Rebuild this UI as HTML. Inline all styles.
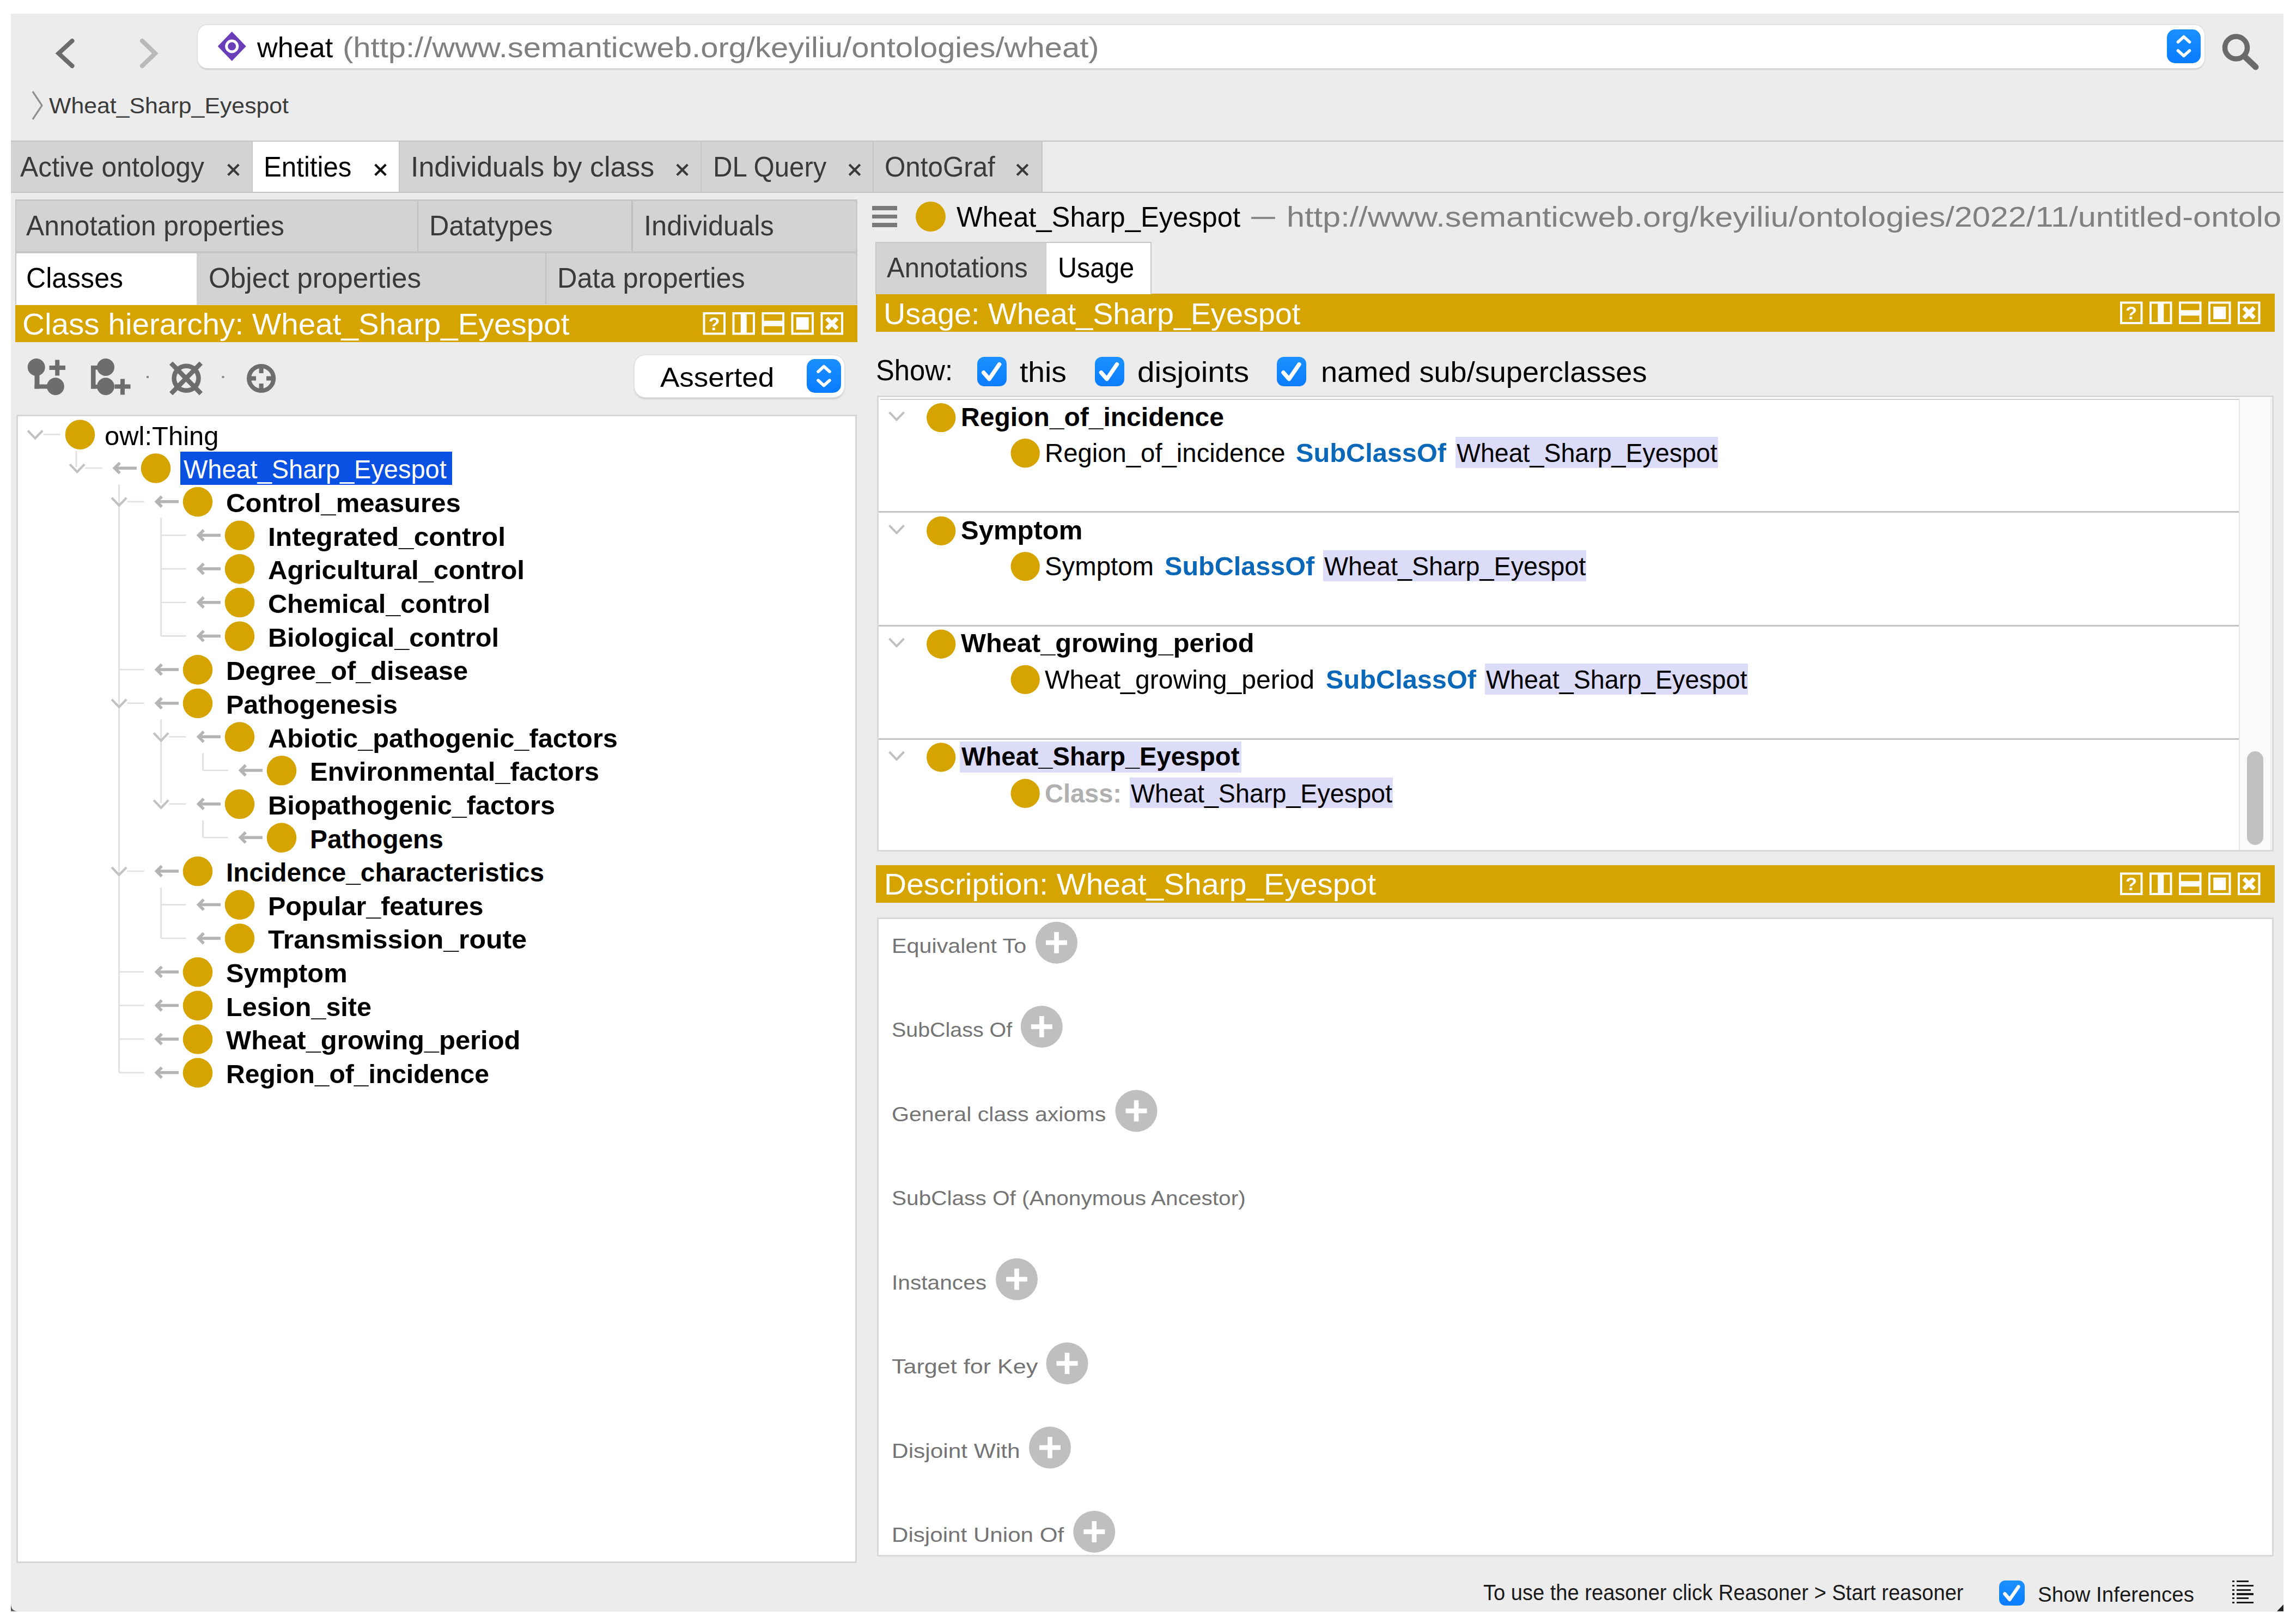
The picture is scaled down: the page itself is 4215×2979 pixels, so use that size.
<!DOCTYPE html>
<html lang="en"><head><meta charset="utf-8"><title>wheat - Protege</title>
<style>
html,body{margin:0;padding:0;background:#fff;}
body{width:4215px;height:2979px;position:relative;overflow:hidden;font-family:"Liberation Sans", sans-serif;}
#r div{position:absolute;}
#t span{position:absolute;white-space:pre;line-height:1;transform-origin:0 0;}
#t b{font-weight:bold;}
svg{position:absolute;left:0;top:0;}
</style></head>
<body>
<div id="r">
<div style="left:20.0px;top:25.0px;width:4172.0px;height:2932.5px;background:#ececec;border-radius:0 0 0 14px;"></div>
<div style="left:363.0px;top:46.0px;width:3684.0px;height:78.5px;background:#fff;border-radius:18px;box-shadow:0 0 0 1.5px #dedede,0 3px 3px -1px #a9a9a9;"></div>
<div style="left:3978.0px;top:54.0px;width:62.0px;height:62.0px;background:linear-gradient(#1a90ff,#087bff);border-radius:15px;"></div>
<div style="left:20.0px;top:258.0px;width:4172.0px;height:96.0px;background:#c3c3c3;"></div>
<div style="left:20.0px;top:260.0px;width:4172.0px;height:92.0px;background:#ececec;"></div>
<div style="left:20.0px;top:260.0px;width:1893.0px;height:92.0px;background:#d3d3d3;"></div>
<div style="left:463.0px;top:260.0px;width:269.0px;height:92.0px;background:#fff;"></div>
<div style="left:461.5px;top:260.0px;width:2.0px;height:92.0px;background:#c6c6c6;"></div>
<div style="left:732.0px;top:260.0px;width:2.0px;height:92.0px;background:#c6c6c6;"></div>
<div style="left:1286.0px;top:260.0px;width:2.0px;height:92.0px;background:#c6c6c6;"></div>
<div style="left:1602.0px;top:260.0px;width:2.0px;height:92.0px;background:#c6c6c6;"></div>
<div style="left:1912.0px;top:260.0px;width:2.0px;height:92.0px;background:#c6c6c6;"></div>
<div style="left:28.0px;top:366.0px;width:1546.0px;height:193.0px;background:#c6c6c6;"></div>
<div style="left:30.0px;top:368.5px;width:1542.0px;height:92.5px;background:#d3d3d3;"></div>
<div style="left:30.0px;top:464.5px;width:1542.0px;height:93.5px;background:#d3d3d3;"></div>
<div style="left:765.5px;top:368.5px;width:2.5px;height:92.5px;background:#c0c0c0;"></div>
<div style="left:1159.0px;top:368.5px;width:2.5px;height:92.5px;background:#c0c0c0;"></div>
<div style="left:30.0px;top:464.5px;width:331.0px;height:94.5px;background:#fff;"></div>
<div style="left:1000.5px;top:464.5px;width:2.5px;height:93.5px;background:#c0c0c0;"></div>
<div style="left:28.0px;top:560.0px;width:1546.0px;height:68.0px;background:#d6a400;"></div>
<div style="left:1608.0px;top:539.0px;width:2567.5px;height:69.5px;background:#d6a400;"></div>
<div style="left:1608.0px;top:1588.0px;width:2567.5px;height:69.0px;background:#d6a400;"></div>
<div style="left:1165.0px;top:651.5px;width:384.7px;height:77.0px;background:#fff;border-radius:20px;box-shadow:0 0 0 1.5px #e0e0e0,0 3px 4px -1px #aaa;"></div>
<div style="left:1481.4px;top:659.3px;width:62.2px;height:61.7px;background:linear-gradient(#1a90ff,#087bff);border-radius:15px;"></div>
<div style="left:30.0px;top:760.5px;width:1543.0px;height:2108.5px;background:#d6d6d6;"></div>
<div style="left:33.0px;top:763.5px;width:1537.0px;height:2102.5px;background:#fff;"></div>
<div style="left:331.0px;top:829.0px;width:498.5px;height:61.0px;background:#0a50e2;"></div>
<div style="left:1601.0px;top:378.0px;width:46.0px;height:7.5px;background:#7a7a7a;"></div>
<div style="left:1601.0px;top:393.5px;width:46.0px;height:7.5px;background:#7a7a7a;"></div>
<div style="left:1601.0px;top:409.0px;width:46.0px;height:7.5px;background:#7a7a7a;"></div>
<div style="left:2297.0px;top:398.0px;width:44.0px;height:3.5px;background:#8a8a8a;"></div>
<div style="left:1607.0px;top:443.5px;width:507.0px;height:96.5px;background:#c8c8c8;"></div>
<div style="left:1609.0px;top:445.5px;width:310.6px;height:94.0px;background:#d3d3d3;"></div>
<div style="left:1921.0px;top:445.5px;width:191.0px;height:94.5px;background:#fff;"></div>
<div style="left:1793.6px;top:655.2px;width:54.0px;height:54.0px;background:linear-gradient(#1b91ff,#0a7cff);border-radius:13.0px;"></div>
<div style="left:2009.5px;top:655.2px;width:54.0px;height:54.0px;background:linear-gradient(#1b91ff,#0a7cff);border-radius:13.0px;"></div>
<div style="left:2344.0px;top:655.2px;width:54.0px;height:54.0px;background:linear-gradient(#1b91ff,#0a7cff);border-radius:13.0px;"></div>
<div style="left:1610.0px;top:726.0px;width:2564.0px;height:837.0px;background:#d8d8d8;"></div>
<div style="left:1613.0px;top:729.0px;width:2558.0px;height:831.0px;background:#fff;"></div>
<div style="left:4110.0px;top:731.0px;width:56.0px;height:829.0px;background:#fafafa;border-left:2px solid #e6e6e6;border-right:2px solid #e9e9e9;"></div>
<div style="left:4125.3px;top:1379.4px;width:30.2px;height:171.9px;background:#c1c1c1;border-radius:15px;"></div>
<div style="left:1616.0px;top:731.8px;width:2494.0px;height:2.5px;background:#cdcdcd;"></div>
<div style="left:1613.0px;top:938.1px;width:2497.0px;height:2.8px;background:#c4c4c4;"></div>
<div style="left:1613.0px;top:1147.1px;width:2497.0px;height:2.8px;background:#c4c4c4;"></div>
<div style="left:1613.0px;top:1355.1px;width:2497.0px;height:2.8px;background:#c4c4c4;"></div>
<div style="left:2671.6px;top:802.3px;width:482.2px;height:57.0px;background:#dcdcf8;"></div>
<div style="left:2428.6px;top:1010.1px;width:483.7px;height:57.0px;background:#dcdcf8;"></div>
<div style="left:2725.7px;top:1217.9px;width:482.9px;height:57.0px;background:#dcdcf8;"></div>
<div style="left:1762.0px;top:1361.0px;width:517.0px;height:56.6px;background:#dcdcf8;"></div>
<div style="left:2073.5px;top:1427.0px;width:483.5px;height:55.7px;background:#dcdcf8;"></div>
<div style="left:1610.0px;top:1684.0px;width:2564.0px;height:1173.0px;background:#d8d8d8;"></div>
<div style="left:1613.0px;top:1687.0px;width:2558.0px;height:1167.0px;background:#fff;"></div>
<div style="left:3670.0px;top:2900.8px;width:46.6px;height:46.6px;background:linear-gradient(#1b91ff,#0a7cff);border-radius:11.2px;"></div>
<div style="left:4105.8px;top:2901.0px;width:22.7px;height:3.3px;background:#1a1a1a;"></div>
<div style="left:4097.8px;top:2901.0px;width:3.8px;height:3.3px;background:#1a1a1a;"></div>
<div style="left:4105.8px;top:2908.8px;width:31.2px;height:3.3px;background:#1a1a1a;"></div>
<div style="left:4097.8px;top:2908.8px;width:3.8px;height:3.3px;background:#1a1a1a;"></div>
<div style="left:4105.8px;top:2916.5px;width:26.2px;height:3.3px;background:#1a1a1a;"></div>
<div style="left:4097.8px;top:2916.5px;width:3.8px;height:3.3px;background:#1a1a1a;"></div>
<div style="left:4105.8px;top:2924.3px;width:31.2px;height:3.3px;background:#1a1a1a;"></div>
<div style="left:4097.8px;top:2924.3px;width:3.8px;height:3.3px;background:#1a1a1a;"></div>
<div style="left:4105.8px;top:2932.0px;width:22.7px;height:3.3px;background:#1a1a1a;"></div>
<div style="left:4097.8px;top:2932.0px;width:3.8px;height:3.3px;background:#1a1a1a;"></div>
<div style="left:4105.8px;top:2939.8px;width:31.2px;height:3.3px;background:#1a1a1a;"></div>
<div style="left:4097.8px;top:2939.8px;width:3.8px;height:3.3px;background:#1a1a1a;"></div>
</div>
<svg width="4215" height="2979" viewBox="0 0 4215 2979">
<polyline points="132.5,75 107.5,98 132.5,121" fill="none" stroke="#6b6b6b" stroke-width="8" stroke-linecap="round" stroke-linejoin="miter"/>
<polyline points="261,75 285,98 261,121" fill="none" stroke="#b9b9b9" stroke-width="8" stroke-linecap="round" stroke-linejoin="miter"/>
<g transform="translate(425.7,85)"><path d="M0,-27 L26,0 L0,27 L-26,0 Z" fill="#6a3eb8"/><circle r="12.5" fill="#fff"/><circle r="7.5" fill="#6a3eb8"/></g>
<g fill="none" stroke="#fff" stroke-width="5.6" stroke-linecap="round" stroke-linejoin="round"><polyline points="3998.5,77.0 4009.0,67.5 4019.5,77.0"/><polyline points="3998.5,93.0 4009.0,102.5 4019.5,93.0"/></g>
<g fill="none" stroke="#6a6a6a" stroke-linecap="round"><circle cx="4105" cy="87.5" r="20.5" stroke-width="9.5"/><line x1="4121" y1="104" x2="4141" y2="123" stroke-width="11"/></g>
<polyline points="60,168 77,193.5 60,219" fill="none" stroke="#8f8f8f" stroke-width="3.2" stroke-linejoin="miter"/>
<g stroke="#3a3a3a" stroke-width="4.2" stroke-linecap="butt"><line x1="418.7" y1="301.9" x2="438.3" y2="321.5"/><line x1="418.7" y1="321.5" x2="438.3" y2="301.9"/></g>
<g stroke="#111" stroke-width="4.2" stroke-linecap="butt"><line x1="688.7" y1="301.9" x2="708.3" y2="321.5"/><line x1="688.7" y1="321.5" x2="708.3" y2="301.9"/></g>
<g stroke="#3a3a3a" stroke-width="4.2" stroke-linecap="butt"><line x1="1242.8" y1="301.9" x2="1262.3999999999999" y2="321.5"/><line x1="1242.8" y1="321.5" x2="1262.3999999999999" y2="301.9"/></g>
<g stroke="#3a3a3a" stroke-width="4.2" stroke-linecap="butt"><line x1="1559.2" y1="301.9" x2="1578.8" y2="321.5"/><line x1="1559.2" y1="321.5" x2="1578.8" y2="301.9"/></g>
<g stroke="#3a3a3a" stroke-width="4.2" stroke-linecap="butt"><line x1="1867.2" y1="301.9" x2="1886.8" y2="321.5"/><line x1="1867.2" y1="321.5" x2="1886.8" y2="301.9"/></g>
<rect x="1292.5" y="575" width="37.5" height="37.5" fill="none" stroke="#fff" stroke-width="4"/>
<text x="1311.25" y="605.75" font-family="'Liberation Sans', sans-serif" font-weight="bold" font-size="34" fill="#fff" text-anchor="middle">?</text>
<rect x="1346.5" y="575" width="37.5" height="37.5" fill="none" stroke="#fff" stroke-width="4"/>
<rect x="1359.75" y="575" width="11" height="37.5" fill="#fff"/>
<rect x="1400.5" y="575" width="37.5" height="37.5" fill="none" stroke="#fff" stroke-width="4"/>
<rect x="1400.5" y="588.75" width="37.5" height="10" fill="#fff"/>
<rect x="1454.5" y="575" width="37.5" height="37.5" fill="none" stroke="#fff" stroke-width="4"/>
<rect x="1461.75" y="582.25" width="23" height="23" fill="#fff"/>
<rect x="1508.5" y="575" width="37.5" height="37.5" fill="none" stroke="#fff" stroke-width="4"/>
<g stroke="#fff" stroke-width="7.5"><line x1="1517.75" y1="584.25" x2="1536.75" y2="603.25"/><line x1="1517.75" y1="603.25" x2="1536.75" y2="584.25"/></g>
<rect x="3894" y="555.5" width="37.5" height="37.5" fill="none" stroke="#fff" stroke-width="4"/>
<text x="3912.75" y="586.25" font-family="'Liberation Sans', sans-serif" font-weight="bold" font-size="34" fill="#fff" text-anchor="middle">?</text>
<rect x="3948" y="555.5" width="37.5" height="37.5" fill="none" stroke="#fff" stroke-width="4"/>
<rect x="3961.25" y="555.5" width="11" height="37.5" fill="#fff"/>
<rect x="4002" y="555.5" width="37.5" height="37.5" fill="none" stroke="#fff" stroke-width="4"/>
<rect x="4002" y="569.25" width="37.5" height="10" fill="#fff"/>
<rect x="4056" y="555.5" width="37.5" height="37.5" fill="none" stroke="#fff" stroke-width="4"/>
<rect x="4063.25" y="562.75" width="23" height="23" fill="#fff"/>
<rect x="4110" y="555.5" width="37.5" height="37.5" fill="none" stroke="#fff" stroke-width="4"/>
<g stroke="#fff" stroke-width="7.5"><line x1="4119.25" y1="564.75" x2="4138.25" y2="583.75"/><line x1="4119.25" y1="583.75" x2="4138.25" y2="564.75"/></g>
<rect x="3894" y="1603.5" width="37.5" height="37.5" fill="none" stroke="#fff" stroke-width="4"/>
<text x="3912.75" y="1634.25" font-family="'Liberation Sans', sans-serif" font-weight="bold" font-size="34" fill="#fff" text-anchor="middle">?</text>
<rect x="3948" y="1603.5" width="37.5" height="37.5" fill="none" stroke="#fff" stroke-width="4"/>
<rect x="3961.25" y="1603.5" width="11" height="37.5" fill="#fff"/>
<rect x="4002" y="1603.5" width="37.5" height="37.5" fill="none" stroke="#fff" stroke-width="4"/>
<rect x="4002" y="1617.25" width="37.5" height="10" fill="#fff"/>
<rect x="4056" y="1603.5" width="37.5" height="37.5" fill="none" stroke="#fff" stroke-width="4"/>
<rect x="4063.25" y="1610.75" width="23" height="23" fill="#fff"/>
<rect x="4110" y="1603.5" width="37.5" height="37.5" fill="none" stroke="#fff" stroke-width="4"/>
<g stroke="#fff" stroke-width="7.5"><line x1="4119.25" y1="1612.75" x2="4138.25" y2="1631.75"/><line x1="4119.25" y1="1631.75" x2="4138.25" y2="1612.75"/></g>
<g fill="#6d6d6d" stroke="none"><circle cx="66.7" cy="674" r="16"/><circle cx="101.9" cy="709.3" r="16"/><rect x="63.5" y="680" width="9" height="33.5"/><rect x="63.5" y="705.5" width="30" height="8"/><rect x="90.5" y="671" width="29.5" height="8"/><rect x="101.2" y="660.5" width="8" height="29"/></g>
<g fill="#6d6d6d" stroke="none"><circle cx="194" cy="674" r="16"/><circle cx="194" cy="709.3" r="16"/><rect x="167" y="671" width="8.5" height="42.5"/><rect x="167" y="671" width="20" height="7.5"/><rect x="167" y="706" width="20" height="7.5"/><rect x="210.5" y="705.5" width="29" height="8"/><rect x="221" y="695.5" width="8" height="29"/></g>
<rect x="269" y="690" width="4" height="4" fill="#8a8a8a"/><rect x="407.5" y="690" width="4" height="4" fill="#8a8a8a"/>
<g fill="none" stroke="#6d6d6d" stroke-width="8.5"><circle cx="342" cy="694.3" r="22.5"/><line x1="314" y1="666.5" x2="369" y2="722.5"/><line x1="314" y1="722.5" x2="369" y2="666.5"/></g>
<g fill="none" stroke="#6d6d6d" stroke-width="8"><circle cx="479.6" cy="694.5" r="22.6"/><line x1="479.6" y1="672" x2="479.6" y2="685"/><line x1="479.6" y1="704" x2="479.6" y2="717"/><line x1="457" y1="694.5" x2="470" y2="694.5"/><line x1="489" y1="694.5" x2="502" y2="694.5"/></g>
<g fill="none" stroke="#fff" stroke-width="5.6" stroke-linecap="round" stroke-linejoin="round"><polyline points="1502.0,682.15 1512.5,672.65 1523.0,682.15"/><polyline points="1502.0,698.15 1512.5,707.65 1523.0,698.15"/></g>
<line x1="140.1" y1="827.5" x2="140.1" y2="857.15" stroke="#e1e1e1" stroke-width="3"/>
<line x1="218.6" y1="889.15" x2="218.6" y2="1968.85" stroke="#e1e1e1" stroke-width="3"/>
<line x1="295.6" y1="950.8" x2="295.6" y2="1167.4" stroke="#e1e1e1" stroke-width="3"/>
<line x1="295.6" y1="1320.7" x2="295.6" y2="1473.65" stroke="#e1e1e1" stroke-width="3"/>
<line x1="372.6" y1="1382.35" x2="372.6" y2="1414.0" stroke="#e1e1e1" stroke-width="3"/>
<line x1="372.6" y1="1505.65" x2="372.6" y2="1537.3" stroke="#e1e1e1" stroke-width="3"/>
<line x1="295.6" y1="1628.9499999999998" x2="295.6" y2="1722.25" stroke="#e1e1e1" stroke-width="3"/>
<circle cx="147" cy="797.80" r="27.3" fill="#d6a400"/>
<polyline points="51.099999999999994,790.5 64.6,804.5 78.1,790.5" fill="none" stroke="#c2c2c2" stroke-width="4.2" stroke-linejoin="miter"/>
<line x1="79.6" y1="797.5" x2="110.6" y2="797.5" stroke="#e1e1e1" stroke-width="2.6"/>
<circle cx="286" cy="859.45" r="27.3" fill="#d6a400"/>
<polyline points="128.1,852.15 141.6,866.15 155.1,852.15" fill="none" stroke="#c2c2c2" stroke-width="4.2" stroke-linejoin="miter"/>
<line x1="156.6" y1="859.15" x2="187.6" y2="859.15" stroke="#e1e1e1" stroke-width="2.6"/>
<g fill="none" stroke="#b4b4b4" stroke-width="5.5" stroke-linejoin="miter"><line x1="211" y1="859.15" x2="251" y2="859.15"/><polyline points="220,849.65 210.5,859.15 220,868.65"/></g>
<circle cx="363" cy="921.10" r="27.3" fill="#d6a400"/>
<polyline points="205.1,913.8 218.6,927.8 232.1,913.8" fill="none" stroke="#c2c2c2" stroke-width="4.2" stroke-linejoin="miter"/>
<line x1="233.6" y1="920.8" x2="264.6" y2="920.8" stroke="#e1e1e1" stroke-width="2.6"/>
<g fill="none" stroke="#b4b4b4" stroke-width="5.5" stroke-linejoin="miter"><line x1="288" y1="920.8" x2="328" y2="920.8"/><polyline points="297,911.3 287.5,920.8 297,930.3"/></g>
<circle cx="440" cy="982.75" r="27.3" fill="#d6a400"/>
<line x1="295.6" y1="982.45" x2="341.6" y2="982.45" stroke="#e1e1e1" stroke-width="2.6"/>
<g fill="none" stroke="#b4b4b4" stroke-width="5.5" stroke-linejoin="miter"><line x1="365" y1="982.45" x2="405" y2="982.45"/><polyline points="374,972.95 364.5,982.45 374,991.95"/></g>
<circle cx="440" cy="1044.40" r="27.3" fill="#d6a400"/>
<line x1="295.6" y1="1044.1" x2="341.6" y2="1044.1" stroke="#e1e1e1" stroke-width="2.6"/>
<g fill="none" stroke="#b4b4b4" stroke-width="5.5" stroke-linejoin="miter"><line x1="365" y1="1044.1" x2="405" y2="1044.1"/><polyline points="374,1034.6 364.5,1044.1 374,1053.6"/></g>
<circle cx="440" cy="1106.05" r="27.3" fill="#d6a400"/>
<line x1="295.6" y1="1105.75" x2="341.6" y2="1105.75" stroke="#e1e1e1" stroke-width="2.6"/>
<g fill="none" stroke="#b4b4b4" stroke-width="5.5" stroke-linejoin="miter"><line x1="365" y1="1105.75" x2="405" y2="1105.75"/><polyline points="374,1096.25 364.5,1105.75 374,1115.25"/></g>
<circle cx="440" cy="1167.70" r="27.3" fill="#d6a400"/>
<line x1="295.6" y1="1167.4" x2="341.6" y2="1167.4" stroke="#e1e1e1" stroke-width="2.6"/>
<g fill="none" stroke="#b4b4b4" stroke-width="5.5" stroke-linejoin="miter"><line x1="365" y1="1167.4" x2="405" y2="1167.4"/><polyline points="374,1157.9 364.5,1167.4 374,1176.9"/></g>
<circle cx="363" cy="1229.35" r="27.3" fill="#d6a400"/>
<line x1="218.6" y1="1229.05" x2="264.6" y2="1229.05" stroke="#e1e1e1" stroke-width="2.6"/>
<g fill="none" stroke="#b4b4b4" stroke-width="5.5" stroke-linejoin="miter"><line x1="288" y1="1229.05" x2="328" y2="1229.05"/><polyline points="297,1219.55 287.5,1229.05 297,1238.55"/></g>
<circle cx="363" cy="1291.00" r="27.3" fill="#d6a400"/>
<polyline points="205.1,1283.7 218.6,1297.7 232.1,1283.7" fill="none" stroke="#c2c2c2" stroke-width="4.2" stroke-linejoin="miter"/>
<line x1="233.6" y1="1290.7" x2="264.6" y2="1290.7" stroke="#e1e1e1" stroke-width="2.6"/>
<g fill="none" stroke="#b4b4b4" stroke-width="5.5" stroke-linejoin="miter"><line x1="288" y1="1290.7" x2="328" y2="1290.7"/><polyline points="297,1281.2 287.5,1290.7 297,1300.2"/></g>
<circle cx="440" cy="1352.65" r="27.3" fill="#d6a400"/>
<polyline points="282.1,1345.35 295.6,1359.35 309.1,1345.35" fill="none" stroke="#c2c2c2" stroke-width="4.2" stroke-linejoin="miter"/>
<line x1="310.6" y1="1352.35" x2="341.6" y2="1352.35" stroke="#e1e1e1" stroke-width="2.6"/>
<g fill="none" stroke="#b4b4b4" stroke-width="5.5" stroke-linejoin="miter"><line x1="365" y1="1352.35" x2="405" y2="1352.35"/><polyline points="374,1342.85 364.5,1352.35 374,1361.85"/></g>
<circle cx="517" cy="1414.30" r="27.3" fill="#d6a400"/>
<line x1="372.6" y1="1414.0" x2="418.6" y2="1414.0" stroke="#e1e1e1" stroke-width="2.6"/>
<g fill="none" stroke="#b4b4b4" stroke-width="5.5" stroke-linejoin="miter"><line x1="442" y1="1414.0" x2="482" y2="1414.0"/><polyline points="451,1404.5 441.5,1414.0 451,1423.5"/></g>
<circle cx="440" cy="1475.95" r="27.3" fill="#d6a400"/>
<polyline points="282.1,1468.65 295.6,1482.65 309.1,1468.65" fill="none" stroke="#c2c2c2" stroke-width="4.2" stroke-linejoin="miter"/>
<line x1="310.6" y1="1475.65" x2="341.6" y2="1475.65" stroke="#e1e1e1" stroke-width="2.6"/>
<g fill="none" stroke="#b4b4b4" stroke-width="5.5" stroke-linejoin="miter"><line x1="365" y1="1475.65" x2="405" y2="1475.65"/><polyline points="374,1466.15 364.5,1475.65 374,1485.15"/></g>
<circle cx="517" cy="1537.60" r="27.3" fill="#d6a400"/>
<line x1="372.6" y1="1537.3" x2="418.6" y2="1537.3" stroke="#e1e1e1" stroke-width="2.6"/>
<g fill="none" stroke="#b4b4b4" stroke-width="5.5" stroke-linejoin="miter"><line x1="442" y1="1537.3" x2="482" y2="1537.3"/><polyline points="451,1527.8 441.5,1537.3 451,1546.8"/></g>
<circle cx="363" cy="1599.25" r="27.3" fill="#d6a400"/>
<polyline points="205.1,1591.9499999999998 218.6,1605.9499999999998 232.1,1591.9499999999998" fill="none" stroke="#c2c2c2" stroke-width="4.2" stroke-linejoin="miter"/>
<line x1="233.6" y1="1598.9499999999998" x2="264.6" y2="1598.9499999999998" stroke="#e1e1e1" stroke-width="2.6"/>
<g fill="none" stroke="#b4b4b4" stroke-width="5.5" stroke-linejoin="miter"><line x1="288" y1="1598.9499999999998" x2="328" y2="1598.9499999999998"/><polyline points="297,1589.4499999999998 287.5,1598.9499999999998 297,1608.4499999999998"/></g>
<circle cx="440" cy="1660.90" r="27.3" fill="#d6a400"/>
<line x1="295.6" y1="1660.6" x2="341.6" y2="1660.6" stroke="#e1e1e1" stroke-width="2.6"/>
<g fill="none" stroke="#b4b4b4" stroke-width="5.5" stroke-linejoin="miter"><line x1="365" y1="1660.6" x2="405" y2="1660.6"/><polyline points="374,1651.1 364.5,1660.6 374,1670.1"/></g>
<circle cx="440" cy="1722.55" r="27.3" fill="#d6a400"/>
<line x1="295.6" y1="1722.25" x2="341.6" y2="1722.25" stroke="#e1e1e1" stroke-width="2.6"/>
<g fill="none" stroke="#b4b4b4" stroke-width="5.5" stroke-linejoin="miter"><line x1="365" y1="1722.25" x2="405" y2="1722.25"/><polyline points="374,1712.75 364.5,1722.25 374,1731.75"/></g>
<circle cx="363" cy="1784.20" r="27.3" fill="#d6a400"/>
<line x1="218.6" y1="1783.9" x2="264.6" y2="1783.9" stroke="#e1e1e1" stroke-width="2.6"/>
<g fill="none" stroke="#b4b4b4" stroke-width="5.5" stroke-linejoin="miter"><line x1="288" y1="1783.9" x2="328" y2="1783.9"/><polyline points="297,1774.4 287.5,1783.9 297,1793.4"/></g>
<circle cx="363" cy="1845.85" r="27.3" fill="#d6a400"/>
<line x1="218.6" y1="1845.55" x2="264.6" y2="1845.55" stroke="#e1e1e1" stroke-width="2.6"/>
<g fill="none" stroke="#b4b4b4" stroke-width="5.5" stroke-linejoin="miter"><line x1="288" y1="1845.55" x2="328" y2="1845.55"/><polyline points="297,1836.05 287.5,1845.55 297,1855.05"/></g>
<circle cx="363" cy="1907.50" r="27.3" fill="#d6a400"/>
<line x1="218.6" y1="1907.2" x2="264.6" y2="1907.2" stroke="#e1e1e1" stroke-width="2.6"/>
<g fill="none" stroke="#b4b4b4" stroke-width="5.5" stroke-linejoin="miter"><line x1="288" y1="1907.2" x2="328" y2="1907.2"/><polyline points="297,1897.7 287.5,1907.2 297,1916.7"/></g>
<circle cx="363" cy="1969.15" r="27.3" fill="#d6a400"/>
<line x1="218.6" y1="1968.85" x2="264.6" y2="1968.85" stroke="#e1e1e1" stroke-width="2.6"/>
<g fill="none" stroke="#b4b4b4" stroke-width="5.5" stroke-linejoin="miter"><line x1="288" y1="1968.85" x2="328" y2="1968.85"/><polyline points="297,1959.35 287.5,1968.85 297,1978.35"/></g>
<circle cx="1708.5" cy="397.5" r="27.5" fill="#d6a400"/>
<polyline points="1805.6,683.7 1816.1,695.7 1834.6,668.7" fill="none" stroke="#fff" stroke-width="7.4" stroke-linecap="round" stroke-linejoin="round"/>
<polyline points="2021.5,683.7 2032.0,695.7 2050.5,668.7" fill="none" stroke="#fff" stroke-width="7.4" stroke-linecap="round" stroke-linejoin="round"/>
<polyline points="2356.0,683.7 2366.5,695.7 2385.0,668.7" fill="none" stroke="#fff" stroke-width="7.4" stroke-linecap="round" stroke-linejoin="round"/>
<polyline points="1632.5,756.6 1646,770.6 1659.5,756.6" fill="none" stroke="#c0c0c0" stroke-width="4" stroke-linejoin="miter"/>
<circle cx="1727.7" cy="766.6" r="26.7" fill="#d6a400"/>
<circle cx="1882.2" cy="831.8" r="26.7" fill="#d6a400"/>
<polyline points="1632.5,964.4000000000001 1646,978.4000000000001 1659.5,964.4000000000001" fill="none" stroke="#c0c0c0" stroke-width="4" stroke-linejoin="miter"/>
<circle cx="1727.7" cy="974.4" r="26.7" fill="#d6a400"/>
<circle cx="1882.2" cy="1039.6" r="26.7" fill="#d6a400"/>
<polyline points="1632.5,1172.2 1646,1186.2 1659.5,1172.2" fill="none" stroke="#c0c0c0" stroke-width="4" stroke-linejoin="miter"/>
<circle cx="1727.7" cy="1182.2" r="26.7" fill="#d6a400"/>
<circle cx="1882.2" cy="1247.4" r="26.7" fill="#d6a400"/>
<polyline points="1632.5,1380 1646,1394 1659.5,1380" fill="none" stroke="#c0c0c0" stroke-width="4" stroke-linejoin="miter"/>
<circle cx="1727.7" cy="1390.0" r="26.7" fill="#d6a400"/>
<circle cx="1882.2" cy="1456.3" r="26.7" fill="#d6a400"/>
<circle cx="1939.5" cy="1730.2" r="38.5" fill="#bfbfbf"/><rect x="1920.0" y="1725.9" width="39" height="8.6" fill="#fff"/><rect x="1935.2" y="1710.7" width="8.6" height="39" fill="#fff"/>
<circle cx="1912.3" cy="1884.5" r="38.5" fill="#bfbfbf"/><rect x="1892.8" y="1880.2" width="39" height="8.6" fill="#fff"/><rect x="1908.0" y="1865.0" width="8.6" height="39" fill="#fff"/>
<circle cx="2086" cy="2039.0" r="38.5" fill="#bfbfbf"/><rect x="2066.5" y="2034.6999999999998" width="39" height="8.6" fill="#fff"/><rect x="2081.7" y="2019.4999999999998" width="8.6" height="39" fill="#fff"/>
<circle cx="1866.5" cy="2348.0" r="38.5" fill="#bfbfbf"/><rect x="1847.0" y="2343.7" width="39" height="8.6" fill="#fff"/><rect x="1862.2" y="2328.5" width="8.6" height="39" fill="#fff"/>
<circle cx="1959" cy="2502.5" r="38.5" fill="#bfbfbf"/><rect x="1939.5" y="2498.2" width="39" height="8.6" fill="#fff"/><rect x="1954.7" y="2483.0" width="8.6" height="39" fill="#fff"/>
<circle cx="1927.5" cy="2657.0" r="38.5" fill="#bfbfbf"/><rect x="1908.0" y="2652.7" width="39" height="8.6" fill="#fff"/><rect x="1923.2" y="2637.5" width="8.6" height="39" fill="#fff"/>
<circle cx="2008.8" cy="2811.5" r="38.5" fill="#bfbfbf"/><rect x="1989.3" y="2807.2" width="39" height="8.6" fill="#fff"/><rect x="2004.5" y="2792.0" width="8.6" height="39" fill="#fff"/>
<polyline points="3680.4,2925.4 3689.4,2935.8 3705.4,2912.5" fill="none" stroke="#fff" stroke-width="6.4" stroke-linecap="round" stroke-linejoin="round"/>
<path d="M4192,2945 L4192,2957.5 L4180,2957.5 Z" fill="#222"/>
<path d="M20,2943 L20,2957.5 L33,2957.5 Q20,2957.5 20,2943 Z" fill="#555"/>
</svg>
<div id="t">
<span style="left:472.4px;top:61.8px;font-size:51.4px;color:#000;transform:scaleX(1.0157)">wheat</span>
<span style="left:628.5px;top:61.8px;font-size:51.4px;color:#808080;transform:scaleX(1.1279)">(http://www.semanticweb.org/keyiliu/ontologies/wheat)</span>
<span style="left:90.0px;top:174.3px;font-size:41.3px;color:#3b3b3b;transform:scaleX(1.0360)">Wheat_Sharp_Eyespot</span>
<span style="left:37.0px;top:280.9px;font-size:51.4px;color:#3a3a3a;transform:scaleX(0.9698)">Active ontology</span>
<span style="left:484.0px;top:280.9px;font-size:51.4px;color:#000;transform:scaleX(0.9583)">Entities</span>
<span style="left:753.8px;top:280.9px;font-size:51.4px;color:#3a3a3a;transform:scaleX(1.0101)">Individuals by class</span>
<span style="left:1308.7px;top:280.9px;font-size:51.4px;color:#3a3a3a;transform:scaleX(0.9554)">DL Query</span>
<span style="left:1624.0px;top:280.9px;font-size:51.4px;color:#3a3a3a;transform:scaleX(0.9595)">OntoGraf</span>
<span style="left:48.0px;top:389.3px;font-size:51.4px;color:#3a3a3a;transform:scaleX(0.9702)">Annotation properties</span>
<span style="left:788.4px;top:389.3px;font-size:51.4px;color:#3a3a3a;transform:scaleX(0.9793)">Datatypes</span>
<span style="left:1181.7px;top:389.3px;font-size:51.4px;color:#3a3a3a;transform:scaleX(0.9834)">Individuals</span>
<span style="left:48.0px;top:484.8px;font-size:51.4px;color:#000;transform:scaleX(0.9738)">Classes</span>
<span style="left:383.0px;top:484.8px;font-size:51.4px;color:#3a3a3a;transform:scaleX(0.9966)">Object properties</span>
<span style="left:1022.6px;top:484.8px;font-size:51.4px;color:#3a3a3a;transform:scaleX(0.9813)">Data properties</span>
<span style="left:41.0px;top:567.5px;font-size:55px;color:#fff;transform:scaleX(1.0300)">Class hierarchy: Wheat_Sharp_Eyespot</span>
<span style="left:1621.7px;top:548.5px;font-size:55px;color:#fff;transform:scaleX(1.0134)">Usage: Wheat_Sharp_Eyespot</span>
<span style="left:1622.7px;top:1596.2px;font-size:55px;color:#fff;transform:scaleX(1.0365)">Description: Wheat_Sharp_Eyespot</span>
<span style="left:1211.8px;top:667.7px;font-size:49.5px;color:#000;transform:scaleX(1.0709)">Asserted</span>
<span style="left:192.0px;top:776.7px;font-size:48px;color:#000;transform:scaleX(1.0198)">owl:Thing</span>
<span style="left:337.0px;top:838.3px;font-size:48px;color:#fff;transform:scaleX(0.9778)">Wheat_Sharp_Eyespot</span>
<span style="left:415.0px;top:900.0px;font-size:48px;color:#000;font-weight:bold;transform:scaleX(1.0219)">Control_measures</span>
<span style="left:492.0px;top:961.6px;font-size:48px;color:#000;font-weight:bold;transform:scaleX(1.0347)">Integrated_control</span>
<span style="left:492.0px;top:1023.3px;font-size:48px;color:#000;font-weight:bold;transform:scaleX(1.0268)">Agricultural_control</span>
<span style="left:492.0px;top:1084.9px;font-size:48px;color:#000;font-weight:bold;transform:scaleX(1.0130)">Chemical_control</span>
<span style="left:492.0px;top:1146.6px;font-size:48px;color:#000;font-weight:bold;transform:scaleX(1.0126)">Biological_control</span>
<span style="left:415.0px;top:1208.2px;font-size:48px;color:#000;font-weight:bold;transform:scaleX(1.0147)">Degree_of_disease</span>
<span style="left:415.0px;top:1269.9px;font-size:48px;color:#000;font-weight:bold;transform:scaleX(1.0093)">Pathogenesis</span>
<span style="left:492.0px;top:1331.5px;font-size:48px;color:#000;font-weight:bold;transform:scaleX(1.0156)">Abiotic_pathogenic_factors</span>
<span style="left:569.0px;top:1393.2px;font-size:48px;color:#000;font-weight:bold;transform:scaleX(1.0208)">Environmental_factors</span>
<span style="left:492.0px;top:1454.8px;font-size:48px;color:#000;font-weight:bold;transform:scaleX(1.0133)">Biopathogenic_factors</span>
<span style="left:569.0px;top:1516.5px;font-size:48px;color:#000;font-weight:bold;transform:scaleX(0.9985)">Pathogens</span>
<span style="left:415.0px;top:1578.1px;font-size:48px;color:#000;font-weight:bold;transform:scaleX(0.9949)">Incidence_characteristics</span>
<span style="left:492.0px;top:1639.8px;font-size:48px;color:#000;font-weight:bold;transform:scaleX(1.0086)">Popular_features</span>
<span style="left:492.0px;top:1701.4px;font-size:48px;color:#000;font-weight:bold;transform:scaleX(1.0413)">Transmission_route</span>
<span style="left:415.0px;top:1763.1px;font-size:48px;color:#000;font-weight:bold;transform:scaleX(1.0178)">Symptom</span>
<span style="left:415.0px;top:1824.7px;font-size:48px;color:#000;font-weight:bold;transform:scaleX(1.0110)">Lesion_site</span>
<span style="left:415.0px;top:1886.4px;font-size:48px;color:#000;font-weight:bold;transform:scaleX(1.0183)">Wheat_growing_period</span>
<span style="left:415.0px;top:1948.0px;font-size:48px;color:#000;font-weight:bold;transform:scaleX(1.0005)">Region_of_incidence</span>
<span style="left:1756.0px;top:372.9px;font-size:51.4px;color:#000;transform:scaleX(0.9858)">Wheat_Sharp_Eyespot</span>
<span style="left:2362.0px;top:372.9px;font-size:51.4px;color:#808080;transform:scaleX(1.1566)">http://www.semanticweb.org/keyiliu/ontologies/2022/11/untitled-ontolo</span>
<span style="left:1628.0px;top:465.6px;font-size:51.4px;color:#3a3a3a;transform:scaleX(0.9531)">Annotations</span>
<span style="left:1941.5px;top:465.6px;font-size:51.4px;color:#000;transform:scaleX(0.9430)">Usage</span>
<span style="left:1607.5px;top:653.1px;font-size:53.7px;color:#000;transform:scaleX(0.9449)">Show:</span>
<span style="left:1872.0px;top:657.3px;font-size:52.6px;color:#000;transform:scaleX(1.0506)">this</span>
<span style="left:2088.0px;top:657.3px;font-size:52.6px;color:#000;transform:scaleX(1.0789)">disjoints</span>
<span style="left:2424.5px;top:657.3px;font-size:52.6px;color:#000;transform:scaleX(1.0287)">named sub/superclasses</span>
<span style="left:1763.8px;top:741.8px;font-size:48px;color:#000;font-weight:bold;transform:scaleX(1.0003)">Region_of_incidence</span>
<span style="left:1918.0px;top:808.0px;font-size:48px;color:#000;transform:scaleX(0.9850)">Region_of_incidence</span>
<span style="left:2379.0px;top:808.0px;font-size:48px;color:#0b67b8;font-weight:bold;transform:scaleX(1.0145)">SubClassOf</span>
<span style="left:2673.6px;top:808.0px;font-size:48px;color:#000;transform:scaleX(0.9697)">Wheat_Sharp_Eyespot</span>
<span style="left:1763.8px;top:949.6px;font-size:48px;color:#000;font-weight:bold;transform:scaleX(1.0215)">Symptom</span>
<span style="left:1918.0px;top:1015.8px;font-size:48px;color:#000;transform:scaleX(0.9866)">Symptom</span>
<span style="left:2137.8px;top:1015.8px;font-size:48px;color:#0b67b8;font-weight:bold;transform:scaleX(1.0115)">SubClassOf</span>
<span style="left:2430.6px;top:1015.8px;font-size:48px;color:#000;transform:scaleX(0.9728)">Wheat_Sharp_Eyespot</span>
<span style="left:1763.8px;top:1157.4px;font-size:48px;color:#000;font-weight:bold;transform:scaleX(1.0149)">Wheat_growing_period</span>
<span style="left:1918.0px;top:1223.6px;font-size:48px;color:#000;transform:scaleX(1.0028)">Wheat_growing_period</span>
<span style="left:2434.0px;top:1223.6px;font-size:48px;color:#0b67b8;font-weight:bold;transform:scaleX(1.0145)">SubClassOf</span>
<span style="left:2727.7px;top:1223.6px;font-size:48px;color:#000;transform:scaleX(0.9712)">Wheat_Sharp_Eyespot</span>
<span style="left:1765.4px;top:1365.2px;font-size:48px;color:#000;font-weight:bold;transform:scaleX(0.9811)">Wheat_Sharp_Eyespot</span>
<span style="left:1918.0px;top:1432.5px;font-size:48px;color:#b0b0b0;font-weight:bold;transform:scaleX(0.9786)">Class:</span>
<span style="left:2075.5px;top:1432.5px;font-size:48px;color:#000;transform:scaleX(0.9724)">Wheat_Sharp_Eyespot</span>
<span style="left:1636.8px;top:1717.9px;font-size:37.6px;color:#747474;transform:scaleX(1.0990)">Equivalent To</span>
<span style="left:1636.8px;top:1872.2px;font-size:37.6px;color:#747474;transform:scaleX(1.0487)">SubClass Of</span>
<span style="left:1636.8px;top:2026.7px;font-size:37.6px;color:#747474;transform:scaleX(1.0946)">General class axioms</span>
<span style="left:1636.8px;top:2181.2px;font-size:37.6px;color:#747474;transform:scaleX(1.0801)">SubClass Of (Anonymous Ancestor)</span>
<span style="left:1636.8px;top:2335.7px;font-size:37.6px;color:#747474;transform:scaleX(1.0823)">Instances</span>
<span style="left:1636.8px;top:2490.2px;font-size:37.6px;color:#747474;transform:scaleX(1.1465)">Target for Key</span>
<span style="left:1636.8px;top:2644.7px;font-size:37.6px;color:#747474;transform:scaleX(1.1288)">Disjoint With</span>
<span style="left:1636.8px;top:2799.2px;font-size:37.6px;color:#747474;transform:scaleX(1.1215)">Disjoint Union Of</span>
<span style="left:2723.0px;top:2902.5px;font-size:40px;color:#1a1a1a;transform:scaleX(0.9519)">To use the reasoner click Reasoner &gt; Start reasoner</span>
<span style="left:3741.0px;top:2906.6px;font-size:39px;color:#1a1a1a;transform:scaleX(0.9879)">Show Inferences</span>
</div>
</body></html>
